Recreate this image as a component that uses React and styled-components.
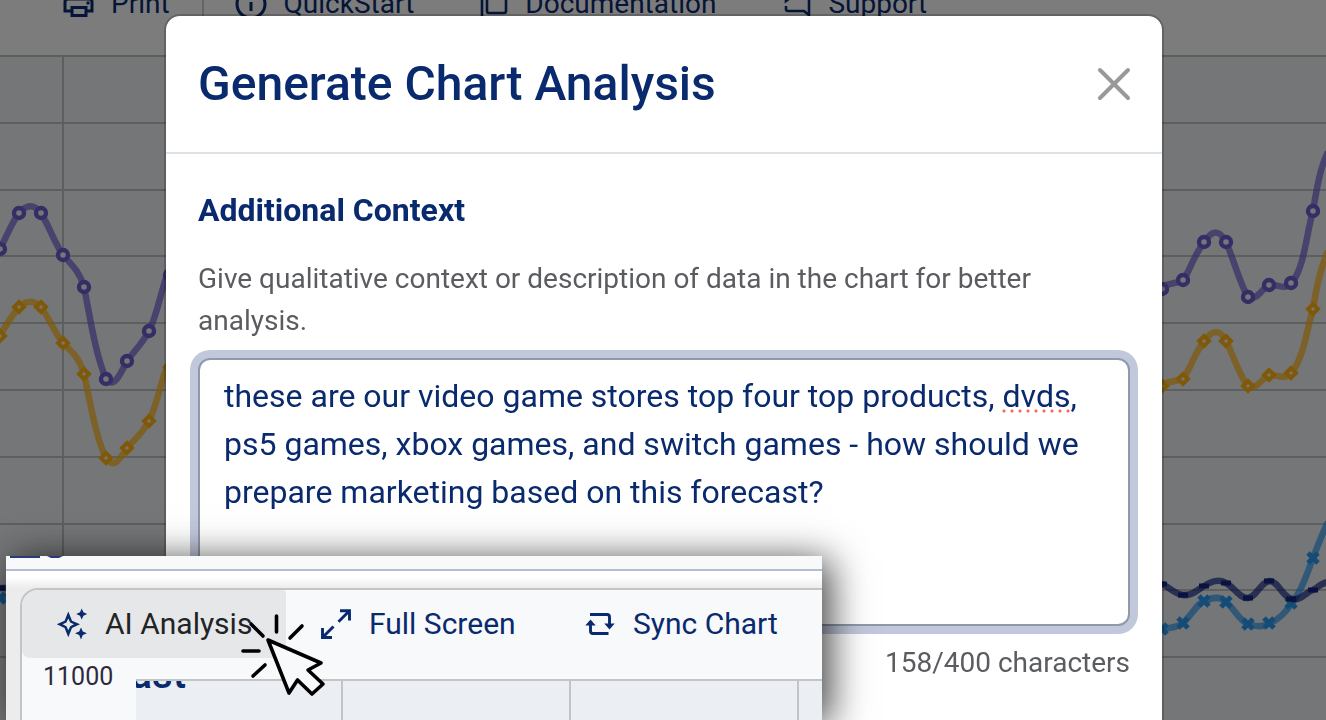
import { useState } from "react";
import styled, { createGlobalStyle } from "styled-components";

const GlobalStyle = createGlobalStyle`
  * {
    box-sizing: border-box;
  }
  body {
    margin: 0;
    font-family: Roboto, "Liberation Sans", sans-serif;
    color: #0a2a6e;
    background: #f8f8f8;
  }
`;

const Page = styled.div`
  position: relative;
  height: 100vh;
  overflow: hidden;
`;

const TopBar = styled.nav`
  display: flex;
  height: 55px;
  padding-left: 62px;
`;

const TopLink = styled.a`
  display: flex;
  gap: 17px;
  height: 38px;
  margin-top: -15px;
  margin-right: ${(props) => props.$after}px;
  align-items: center;
  color: #0a2a6e;
  font-size: 28px;
  line-height: 32px;
  text-decoration: none;
`;

const TopDivider = styled.div`
  width: 2px;
  height: 20px;
  margin-right: 31px;
  background: #c8c8c8;
`;

const ChartSvg = styled.svg`
  display: block;
  width: 100%;
  height: 665px;
  background: #ebedf0;
`;

const Overlay = styled.div`
  position: fixed;
  inset: 0;
  padding: 14px 24px 0 26px;
  background: rgba(0, 0, 0, 0.5);
`;

const Modal = styled.section`
  max-width: 1000px;
  min-height: 800px;
  margin: 0 auto;
  border: 2px solid rgba(0, 0, 0, 0.2);
  border-radius: 16px;
  background: #fff;
  background-clip: padding-box;
`;

const ModalHeader = styled.header`
  display: flex;
  height: 138px;
  padding: 0 30px 0 32px;
  align-items: center;
  justify-content: space-between;
  border-bottom: 2px solid #dee2e6;
`;

const ModalTitle = styled.h1`
  margin: 0;
  font-size: 48px;
  font-weight: 500;
  line-height: 56px;
`;

const CloseButton = styled.button`
  display: flex;
  padding: 0;
  border: none;
  background: none;
  cursor: pointer;
`;

const ModalBody = styled.form`
  display: flex;
  flex-direction: column;
  padding: 32px;
`;

const FieldLabel = styled.label`
  font-size: 32px;
  font-weight: 700;
  line-height: 48px;
`;

const Hint = styled.p`
  margin: 24px 0 16px;
  color: #5a5c60;
  font-size: 28px;
  line-height: 42px;
`;

const Field = styled.div`
  position: relative;
  display: flex;
  height: 268px;
`;

const ContextInput = styled.textarea`
  width: 100%;
  padding: 12px 24px;
  border: 2px solid #8f9aa8;
  border-radius: 12px;
  box-shadow: 0 0 0 8px #c2c8dc;
  color: #0a2a6e;
  background: #fff;
  font-family: inherit;
  font-size: 32px;
  line-height: 48px;
  resize: none;
  outline: none;
`;

// dotted line under the misspelled word
const SpellMark = styled.span`
  position: absolute;
  left: 802px;
  top: 51px;
  width: 72px;
  height: 4px;
  background: radial-gradient(circle, #f5665e 1px, transparent 2px) 0 0 / 8px
    4px;
  pointer-events: none;
`;

const Counter = styled.p`
  margin: 16px 0 0;
  color: #5a5c60;
  font-size: 28px;
  line-height: 42px;
  text-align: right;
`;

const Callout = styled.aside`
  position: fixed;
  left: 6px;
  bottom: 0;
  width: 816px;
  max-width: calc(100vw - 12px);
  height: 164px;
  background: #f8f9fb;
  box-shadow: 8px 4px 36px rgba(0, 0, 0, 0.75);
`;

const CalloutTop = styled.div`
  height: 15px;
  padding-left: 4px;
  border-bottom: 2px solid #b5bdd6;

  svg {
    display: block;
  }
`;

const CalloutInner = styled.div`
  height: 149px;
  padding: 17px 0 0 14px;
  overflow: hidden;
  background: linear-gradient(#fff 0, #fff 6px, #ececec 17px);
`;

const Card = styled.div`
  height: 132px;
  border: 2px solid #c3c5c4;
  border-width: 2px 0 0 2px;
  border-radius: 18px 0 0 0;
  overflow: hidden;
  background: #f8f9fb;
`;

const CardBar = styled.div`
  display: flex;
  height: 68px;
`;

const BarButton = styled.button`
  display: flex;
  flex: none;
  width: 264px;
  padding: 0 0 0 34px;
  gap: 17px;
  align-items: center;
  border: none;
  border-radius: 0 4px 0 8px;
  background: ${(props) => (props.$active ? "#e6e7e8" : "transparent")};
  color: ${(props) => (props.$active ? "#222326" : "#0a2a6e")};
  font-family: inherit;
  font-size: 30px;
  line-height: 36px;
  white-space: nowrap;
  cursor: pointer;
`;

const PlotRow = styled.div`
  display: flex;
`;

const AxisLabel = styled.div`
  width: 114px;
  padding-left: 21px;
  font-size: 25px;
  line-height: 38px;
  color: #2e2a3c;
`;

const Plot = styled.div`
  flex: 1;
  height: 60px;
  margin-top: 21px;
  border-top: 2px solid #c3c5c4;
  background: repeating-linear-gradient(
      90deg,
      transparent 0,
      transparent 205px,
      #c3c5c4 205px,
      #c3c5c4 207px,
      transparent 207px,
      transparent 228px
    )
    #ebeef3;
`;

const PlotTitle = styled.div`
  display: flex;
  height: 9px;
  width: 50px;
  overflow: hidden;
  align-items: flex-end;
  justify-content: flex-end;
  font-size: 40px;
  font-weight: 500;
  line-height: 30px;
`;

const ClickPointer = styled.svg`
  position: absolute;
  left: 234px;
  top: 56px;
`;

const PURPLE = "#6a5acd";
const ORANGE = "#ffb010";
const BLUE = "#2a98ee";
const NAVY = "#142480";

const seriesList = [
  {
    color: PURPLE,
    shape: "circle",
    lines: [
      "M-22 300 L0 249 C6 238 12 222 19 213 C27 204 34 204 41 213 C50 228 55 244 63 255 C71 264 80 272 84 287 C91 322 95 352 106 379 C114 389 120 375 127 361 C135 350 142 344 149 331 C157 315 160 295 167 275",
      "M1162 286 L1183 281 C1191 268 1196 250 1205 242 C1212 229 1220 230 1226 242 C1234 260 1240 284 1248 297 C1256 303 1264 285 1270 285 C1278 284 1284 291 1292 283 C1305 265 1306 235 1313 211 C1317 187 1320 168 1328 152",
    ],
    points: [
      [0, 249], [19, 213], [41, 213], [63, 255], [84, 287], [106, 379], [127, 361], [149, 331], [170, 275],
      [1162, 289], [1183, 280], [1204, 242], [1226, 242], [1248, 297], [1269, 285], [1291, 283], [1313, 211],
    ],
  },
  {
    color: ORANGE,
    shape: "diamond",
    lines: [
      "M-22 370 L0 335 C6 326 12 315 19 307 C27 300 34 300 41 307 C50 320 55 333 63 343 C71 351 80 358 84 374 C91 405 95 435 106 458 C114 470 120 459 127 448 C135 439 142 434 149 421 C157 405 160 385 167 366",
      "M1162 384 L1183 379 C1191 368 1196 349 1205 341 C1212 329 1220 329 1226 341 C1234 357 1240 377 1248 386 C1256 392 1264 375 1270 375 C1278 375 1284 380 1292 373 C1305 353 1306 332 1313 309 C1317 285 1320 270 1328 251",
    ],
    points: [
      [0, 336], [19, 307], [41, 307], [63, 343], [84, 374], [106, 458], [127, 448], [149, 421], [170, 367],
      [1162, 386], [1183, 379], [1204, 341], [1226, 341], [1248, 386], [1269, 375], [1291, 373], [1313, 309],
    ],
  },
  {
    color: BLUE,
    shape: "cross",
    lines: [
      "M-20 604 L6 596",
      "M1160 630 C1168 627 1176 629 1183 623 C1192 615 1198 602 1205 601 C1213 597 1220 596 1226 602 C1234 608 1240 622 1248 624 C1256 627 1264 627 1270 623 C1278 620 1286 612 1292 603 C1301 591 1306 577 1313 558 C1318 545 1322 534 1328 522",
    ],
    points: [[0, 598], [1162, 629], [1183, 623], [1204, 601], [1226, 602], [1248, 624], [1269, 623], [1291, 603], [1313, 558]],
  },
  {
    color: NAVY,
    shape: "dash",
    lines: [
      "M-20 588 L6 588",
      "M1160 583 C1168 586 1174 594 1183 595 C1191 596 1196 591 1204 586 C1211 582 1219 578 1226 583 C1234 587 1240 599 1248 598 C1257 597 1260 582 1270 581 C1279 582 1282 597 1292 599 C1301 601 1306 592 1313 590 C1318 587 1322 583 1328 582",
    ],
    points: [[0, 588], [1162, 584], [1183, 595], [1204, 586], [1226, 583], [1248, 598], [1269, 581], [1291, 599], [1313, 590]],
  },
];

function Marker({ shape, x, y, color }) {
  if (shape === "circle") {
    return <circle cx={x} cy={y} r="5" fill="#ebedf0" stroke={color} strokeWidth="4.4" />;
  }
  if (shape === "diamond") {
    return (
      <path
        d={`M${x} ${y - 5} l5 5 l-5 5 l-5 -5 z`}
        fill="#ebedf0"
        stroke={color}
        strokeWidth="4"
      />
    );
  }
  if (shape === "cross") {
    return (
      <path
        d={`M${x - 5} ${y - 5} l10 10 m0 -10 l-10 10`}
        stroke={color}
        strokeWidth="5"
      />
    );
  }
  return <path d={`M${x - 5} ${y} h10`} stroke={color} strokeWidth="5" />;
}

function BackgroundChart() {
  return (
    <ChartSvg viewBox="0 55 1326 665" preserveAspectRatio="xMidYMin slice">
      <g stroke="#bbbcbd" strokeWidth="2">
        {[56, 123, 190, 256, 323, 390, 457, 524, 590, 657].map((y) => (
          <line key={y} x1="0" x2="1326" y1={y} y2={y} />
        ))}
        <line x1="63" x2="63" y1="56" y2="720" />
      </g>
      {seriesList.map((series) => (
        <g key={series.shape} fill="none">
          {series.lines.map((d) => (
            <path
              key={d}
              d={d}
              stroke={series.color}
              strokeWidth="6.5"
              strokeOpacity="0.7"
            />
          ))}
          {series.points.map(([x, y]) => (
            <Marker key={x} shape={series.shape} x={x} y={y} color={series.color} />
          ))}
        </g>
      ))}
    </ChartSvg>
  );
}

const PrintIcon = () => (
  <svg width="32" height="34" viewBox="0 0 32 34" fill="none" stroke="currentColor" strokeWidth="3">
    <path d="M9 11V3h14v8" />
    <path d="M10 24H3V15q0-3 3-3h21q3 0 3 3v9h-6" />
    <path d="M10 20.500h14v8H10z" />
    <circle cx="26" cy="16" r="1" strokeWidth="1.500" />
  </svg>
);

const InfoIcon = () => (
  <svg width="32" height="34" viewBox="0 0 32 34" fill="none" stroke="currentColor" strokeWidth="3">
    <circle cx="16" cy="17" r="14" />
    <path d="M16 15v9M16 8v3" />
  </svg>
);

const DocsIcon = () => (
  <svg width="28" height="34" viewBox="0 0 28 34" fill="none" stroke="currentColor" strokeWidth="2.6">
    <path d="M2 8v27" />
    <rect x="7" y="1" width="19" height="25" rx="2" />
  </svg>
);

const SupportIcon = () => (
  <svg width="28" height="34" viewBox="0 0 28 34" fill="none" stroke="currentColor" strokeWidth="2.6">
    <path d="M3 19v3q0 2 2 2h16l5 4V8" />
    <path d="M3 0h17v11H7l-4 3z" />
  </svg>
);

const SparkleIcon = () => (
  <svg width="32" height="32" viewBox="0 0 32 32" fill="#0a2a6e">
    <path
      fillRule="evenodd"
      d="M12.300 3.500L16 12.800L24 16.300L16 20L12.300 29.300L8.600 20L.8 16.300L8.600 12.800zM12.300 10.500L14.200 14.500L18 16.300L14.200 18.200L12.300 22.200L10.400 18.200L6.600 16.300L10.400 14.500z"
    />
    <path d="M25.700 .5L27.400 4.300L31.200 6L27.400 7.700L25.700 11.500L24 7.700L20.200 6L24 4.300z" />
    <path d="M25 19.500L26.800 23.500L31 25.300L26.800 27.100L25 31.500L23.200 27.100L19 25.300L23.200 23.500z" />
  </svg>
);

const ExpandIcon = () => (
  <svg width="32" height="32" viewBox="0 0 32 32" fill="none" stroke="currentColor" strokeWidth="2.900">
    <path d="M20 2.800H29.500V12.500M29.500 2.800L18.500 13.800" />
    <path d="M2.500 20V29.500H12M2.500 29.500L13.500 18.500" />
  </svg>
);

const SyncIcon = () => (
  <svg width="32" height="32" viewBox="0 0 32 32" fill="none" stroke="currentColor" strokeWidth="2.900">
    <path d="M6 6.500H23Q25.500 6.500 25.500 9V17M24.500 25.500H9Q6.500 25.500 6.500 23V15" />
    <path d="M20.300 15.500H30.700L25.500 21.500zM1.300 17.500L6.500 11.500L11.700 17.500z" fill="currentColor" stroke="none" />
  </svg>
);

function App() {
  const [context, setContext] = useState(
    "these are our video game stores top four top products, dvds, ps5 games, xbox games, and switch games - how should we prepare marketing based on this forecast?"
  );
  const [edited, setEdited] = useState(false);

  const handleChange = (e) => {
    setContext(e.target.value);
    setEdited(true);
  };

  return (
    <>
      <GlobalStyle />
      <Page>
        <TopBar>
          <TopLink href="#print" $after={32}>
            <PrintIcon />
            Print
          </TopLink>
          <TopDivider />
          <TopLink href="#quickstart" $after={66}>
            <InfoIcon />
            QuickStart
          </TopLink>
          <TopLink href="#documentation" $after={67}>
            <DocsIcon />
            Documentation
          </TopLink>
          <TopLink href="#support" $after={0}>
            <SupportIcon />
            Support
          </TopLink>
        </TopBar>
        <BackgroundChart />
        <Overlay>
          <Modal role="dialog" aria-labelledby="modal-title">
            <ModalHeader>
              <ModalTitle id="modal-title">Generate Chart Analysis</ModalTitle>
              <CloseButton type="button" aria-label="Close">
                <svg width="36" height="36" viewBox="0 0 36 36" stroke="#999" strokeWidth="4" strokeLinecap="round">
                  <path d="M4 4L32 32M32 4L4 32" />
                </svg>
              </CloseButton>
            </ModalHeader>
            <ModalBody>
              <FieldLabel htmlFor="context">Additional Context</FieldLabel>
              <Hint>
                Give qualitative context or description of data in the chart for
                better analysis.
              </Hint>
              <Field>
                <ContextInput
                  id="context"
                  maxLength={400}
                  spellCheck={edited}
                  value={context}
                  onChange={handleChange}
                />
                {!edited && <SpellMark />}
              </Field>
              <Counter>{context.length}/400 characters</Counter>
            </ModalBody>
          </Modal>
        </Overlay>
        <Callout>
          <CalloutTop>
            <svg width="60" height="3" viewBox="0 0 60 3" fill="#2a3a7c">
              <path d="M0 0h30v2H0zM37 0h16l-4 2H41z" />
            </svg>
          </CalloutTop>
          <CalloutInner>
            <Card>
              <CardBar>
                <BarButton type="button" $active>
                  <SparkleIcon />
                  AI Analysis
                </BarButton>
                <BarButton type="button">
                  <ExpandIcon />
                  Full Screen
                </BarButton>
                <BarButton type="button">
                  <SyncIcon />
                  Sync Chart
                </BarButton>
              </CardBar>
              <PlotRow>
                <AxisLabel>11000</AxisLabel>
                <Plot>
                  <PlotTitle>ast</PlotTitle>
                </Plot>
              </PlotRow>
            </Card>
          </CalloutInner>
          <ClickPointer width="92" height="92" viewBox="240 612 92 92" fill="none" stroke="#000" strokeWidth="3.6" strokeLinecap="round" strokeLinejoin="round">
            <path d="M268 640L321 663L308 670L323 684L312 694L297.500 680L289 693Z" fill="#f8f9fb" />
            <path d="M276.500 616V632M302 626L290 638M251 624L263 636M243 651H259M265 665L253 676" />
          </ClickPointer>
        </Callout>
      </Page>
    </>
  );
}

export default App;
